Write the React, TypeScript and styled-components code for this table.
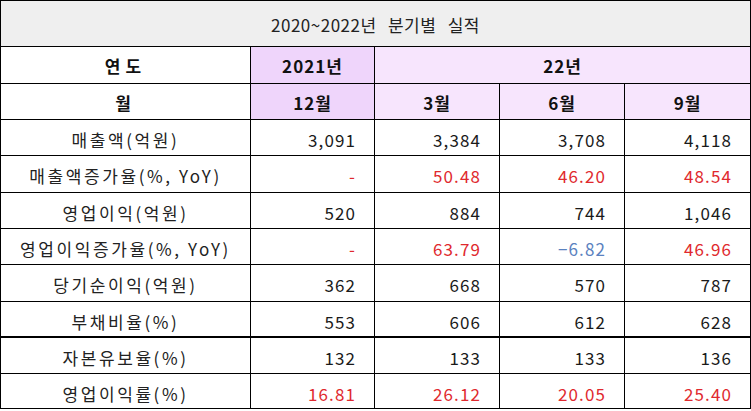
import React from 'react';
import styled, { createGlobalStyle } from 'styled-components';

type Tone = 'plain' | 'up' | 'down';

interface RowData {
  label: string;
  values: { text: string; tone?: Tone }[];
  thick?: boolean;
}

const GlobalStyle = createGlobalStyle`
  html, body {
    margin: 0;
    padding: 0;
    background: #ffffff;
  }
  body {
    font-family: 'Noto Sans CJK KR', 'Noto Sans', sans-serif;
    color: #222222;
  }
`;

const Grid = styled.div`
  display: grid;
  grid-template-columns: 250px 124px 125px 125px 126px;
  grid-template-rows: 46px 37px 36px 36px 37px 36px 36px 37px 36px 36px 35px;
  width: 751px;
  box-sizing: border-box;
  border-top: 1px solid #000;
  border-left: 1px solid #000;
`;

const Cell = styled.div<{ $span?: number; $thick?: boolean }>`
  box-sizing: border-box;
  border-right: 1px solid #000;
  border-bottom: ${({ $thick }) => ($thick ? '2px' : '1px')} solid #000;
  display: flex;
  align-items: flex-start;
  font-size: 17px;
  line-height: 17px;
  ${({ $span }) => ($span ? `grid-column: span ${$span};` : '')}
`;

const TitleCell = styled(Cell)`
  justify-content: center;
  background: #efefef;
  color: #222;
  letter-spacing: 0.5px;
  word-spacing: 7px;
  padding-top: 15px;
`;

const HeadCell = styled(Cell)<{ $shade?: 'plain' | 'strong' | 'soft' }>`
  justify-content: center;
  font-weight: 700;
  color: #111;
  letter-spacing: ${({ $shade }) => ($shade === 'plain' ? '5px' : '1px')};
  padding-top: 10px;
  background: ${({ $shade }) =>
    $shade === 'strong' ? '#efd5fb' : $shade === 'soft' ? '#f7e5fd' : '#ffffff'};
`;

const LabelCell = styled(Cell)`
  justify-content: center;
  letter-spacing: 2.6px;
  color: #222;
  padding-top: 11px;
`;

const toneColor: Record<Tone, string> = {
  plain: '#1a1a1a',
  up: '#e0292e',
  down: '#5b82c0',
};

const ValueCell = styled(Cell)<{ $tone: Tone }>`
  justify-content: flex-end;
  padding-right: 18px;
  padding-top: 11px;
  letter-spacing: 1.1px;
  color: ${({ $tone }) => toneColor[$tone]};
`;

const rows: RowData[] = [
  { label: '매출액(억원)', values: [{ text: '3,091' }, { text: '3,384' }, { text: '3,708' }, { text: '4,118' }] },
  {
    label: '매출액증가율(%, YoY)',
    values: [
      { text: '-', tone: 'up' },
      { text: '50.48', tone: 'up' },
      { text: '46.20', tone: 'up' },
      { text: '48.54', tone: 'up' },
    ],
  },
  { label: '영업이익(억원)', values: [{ text: '520' }, { text: '884' }, { text: '744' }, { text: '1,046' }] },
  {
    label: '영업이익증가율(%, YoY)',
    values: [
      { text: '-', tone: 'up' },
      { text: '63.79', tone: 'up' },
      { text: '−6.82', tone: 'down' },
      { text: '46.96', tone: 'up' },
    ],
  },
  { label: '당기순이익(억원)', values: [{ text: '362' }, { text: '668' }, { text: '570' }, { text: '787' }] },
  { label: '부채비율(%)', values: [{ text: '553' }, { text: '606' }, { text: '612' }, { text: '628' }], thick: true },
  { label: '자본유보율(%)', values: [{ text: '132' }, { text: '133' }, { text: '133' }, { text: '136' }] },
  {
    label: '영업이익률(%)',
    values: [
      { text: '16.81', tone: 'up' },
      { text: '26.12', tone: 'up' },
      { text: '20.05', tone: 'up' },
      { text: '25.40', tone: 'up' },
    ],
  },
];

const App: React.FC = () => {
  return (
    <>
      <GlobalStyle />
      <Grid>
        <TitleCell $span={5}>2020~2022년 분기별 실적</TitleCell>

        <HeadCell $shade="plain">연도</HeadCell>
        <HeadCell $shade="strong">2021년</HeadCell>
        <HeadCell $shade="soft" $span={3}>22년</HeadCell>

        <HeadCell $shade="plain">월</HeadCell>
        <HeadCell $shade="strong">12월</HeadCell>
        <HeadCell $shade="soft">3월</HeadCell>
        <HeadCell $shade="soft">6월</HeadCell>
        <HeadCell $shade="soft">9월</HeadCell>

        {rows.map((row) => (
          <React.Fragment key={row.label}>
            <LabelCell $thick={row.thick}>{row.label}</LabelCell>
            {row.values.map((v, i) => (
              <ValueCell key={i} $tone={v.tone ?? 'plain'} $thick={row.thick}>
                {v.text}
              </ValueCell>
            ))}
          </React.Fragment>
        ))}
      </Grid>
    </>
  );
};

export default App;
